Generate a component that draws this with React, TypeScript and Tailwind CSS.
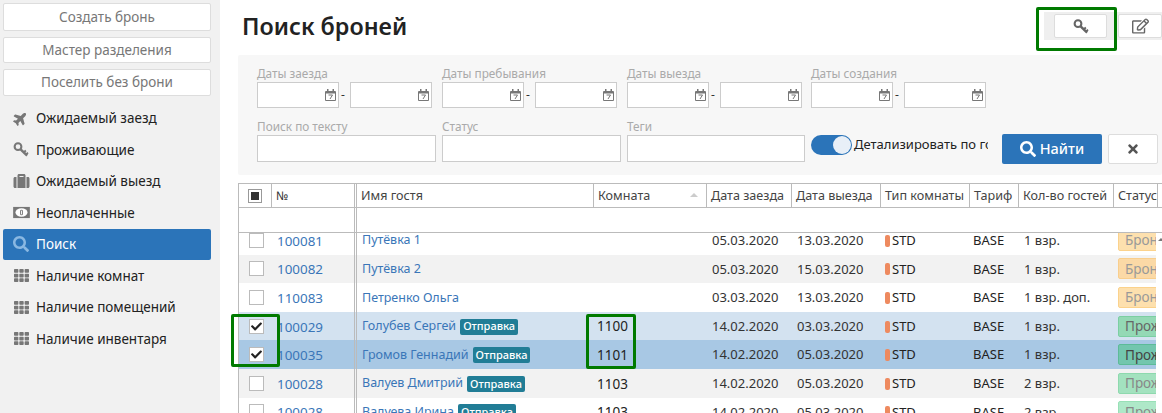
import { FaPlane, FaSuitcase, FaSearch, FaTh, FaTimes, FaRegEdit, FaCheck } from "react-icons/fa";

function KeyIcon({ className }: { className?: string }) {
  return (
    <svg viewBox="0 0 16 16" className={className} fill="none" stroke="currentColor">
      <circle cx="4.8" cy="5" r="3.6" strokeWidth="2.2" />
      <path d="M7.6 7.8 L14.5 14.5" strokeWidth="2.6" />
      <path d="M11 11 L13.2 9 M13.4 13.4 L15.4 11.4" strokeWidth="2" />
    </svg>
  );
}

function MoneyIcon({ className }: { className?: string }) {
  return (
    <svg viewBox="0 0 18 14" className={className}>
      <rect x="0" y="1" width="18" height="12" fill="currentColor" />
      <ellipse cx="9" cy="7" rx="6.5" ry="4.5" fill="#fff" />
      <rect x="7.5" y="4" width="3" height="6" rx="1.4" fill="currentColor" />
      <rect x="8.5" y="5" width="1" height="4" fill="#fff" />
    </svg>
  );
}

function CalendarIcon() {
  return (
    <svg viewBox="0 0 11 12" className="w-[11px] h-[12px] text-[#777]">
      <path fill="none" stroke="currentColor" d="M.5 2.5h10v9H.5z" />
      <path fill="currentColor" d="M2 0h1.5v3H2zM7.5 0H9v3H7.5zM1 3h9v1.5H1z" />
      <path fill="none" stroke="currentColor" d="M3.5 6h4L5 10" />
    </svg>
  );
}

function DateInput() {
  return (
    <div className="w-[82px] h-[26px] bg-white border border-[#ccc] flex items-center justify-end pr-[2px]">
      <CalendarIcon />
    </div>
  );
}

function DateRange({ label, last }: { label: string; last?: boolean }) {
  return (
    <div className={last ? "w-[175px] -ml-[1px]" : "w-[185px]"}>
      <div className="text-[11.8px] leading-[18px] h-[18px] text-[#aaa]">{label}</div>
      <div className="flex items-center gap-[2px] w-[175px]">
        <DateInput />
        <span className="text-xs text-[#333] w-[7px]">-</span>
        <DateInput />
      </div>
    </div>
  );
}

function TextField({ label, width }: { label: string; width: string }) {
  return (
    <div className={width}>
      <div className="text-[11.8px] leading-[18px] h-[18px] text-[#aaa]">{label}</div>
      <div className="h-[27px] bg-white border border-[#ccc]" />
    </div>
  );
}

const actions = [
  { label: "Создать бронь", height: "h-[28px]" },
  { label: "Мастер разделения", height: "h-[26px]" },
  { label: "Поселить без брони", height: "h-[27px]" },
];

const menu = [
  { label: "Ожидаемый заезд", icon: <FaPlane className="w-[15px] h-[15px] -rotate-45" /> },
  { label: "Проживающие", icon: <KeyIcon className="w-[16px] h-[15px]" /> },
  { label: "Ожидаемый выезд", icon: <FaSuitcase className="w-[17px] h-[16px]" /> },
  { label: "Неоплаченные", icon: <MoneyIcon className="w-[17px] h-[13px]" /> },
  { label: "Поиск", icon: <FaSearch className="w-[16px] h-[16px]" />, active: true },
  { label: "Наличие комнат", icon: <FaTh className="w-[17px] h-[15px]" /> },
  { label: "Наличие помещений", icon: <FaTh className="w-[17px] h-[15px]" /> },
  { label: "Наличие инвентаря", icon: <FaTh className="w-[17px] h-[15px]" /> },
];

const columns = "grid grid-cols-[33px_82px_3px_237px_113px_85px_89px_89px_49px_95px_43px_6px]";
const rowColumns = "grid grid-cols-[33px_82px_3px_237px_113px_85px_89px_89px_49px_95px_42px]";

const headers = ["Комната", "Дата заезда", "Дата выезда", "Тип комнаты", "Тариф", "Кол-во гостей", "Статус"];

type Row = {
  id: string;
  name: string;
  send?: boolean;
  room?: string;
  from: string;
  to: string;
  guests: string;
  status: "Бронь" | "Прожив";
  bg: string;
  checked?: boolean;
  statusClass: string;
};

const booked = "bg-[#fde0ae] border-[#fbd28c] text-[#999]";
const rows: Row[] = [
  { id: "100081", name: "Путёвка 1", from: "05.03.2020", to: "13.03.2020", guests: "1 взр.", status: "Бронь", bg: "bg-white", statusClass: booked },
  { id: "100082", name: "Путёвка 2", from: "05.03.2020", to: "15.03.2020", guests: "1 взр.", status: "Бронь", bg: "bg-[#f2f2f2]", statusClass: "bg-[#fbd9a6] border-[#f9ce8c] text-[#999]" },
  { id: "110083", name: "Петренко Ольга", from: "03.03.2020", to: "13.03.2020", guests: "1 взр. доп.", status: "Бронь", bg: "bg-white", statusClass: booked },
  { id: "100029", name: "Голубев Сергей", send: true, room: "1100", from: "14.02.2020", to: "03.03.2020", guests: "1 взр.", status: "Прожив", bg: "bg-[#d3e2f0]", checked: true, statusClass: "bg-[#94d9b5] border-[#7bcfa2] text-[#666]" },
  { id: "100035", name: "Громов Геннадий", send: true, room: "1101", from: "14.02.2020", to: "05.03.2020", guests: "1 взр.", status: "Прожив", bg: "bg-[#a8c8e4]", checked: true, statusClass: "bg-[#73c6ae] border-[#5dbb98] text-[#444]" },
  { id: "100028", name: "Валуев Дмитрий", send: true, room: "1103", from: "14.02.2020", to: "05.03.2020", guests: "2 взр.", status: "Прожив", bg: "bg-[#f2f2f2]", statusClass: "bg-[#a3e2bf] border-[#8ed9ae] text-[#888]" },
  { id: "100028", name: "Валуева Ирина", send: true, room: "1103", from: "14.02.2020", to: "05.03.2020", guests: "2 взр.", status: "Прожив", bg: "bg-white", statusClass: "bg-[#aee8c8] border-[#98e0b6] text-[#888]" },
];

export default function App() {
  return (
    <div className="relative w-[1162px] h-[413px] overflow-hidden flex bg-white text-[13px] text-[#333] font-['Noto_Sans','Open_Sans',sans-serif]">
      {/* Sidebar */}
      <aside className="w-[220px] shrink-0 bg-[#f1f1f1] pt-[3px] px-[3px]">
        <div className="w-[208px] flex flex-col gap-[6px]">
          {actions.map((a) => (
            <div key={a.label} className={`${a.height} bg-white border border-[#ddd] rounded-[2px] flex items-center justify-center text-[13.5px] text-[#777]`}>
              {a.label}
            </div>
          ))}
        </div>
        <nav className="w-[208px] mt-[6.5px] flex flex-col">
          {menu.map((m) => (
            <div
              key={m.label}
              className={`h-[31.5px] flex items-center pl-[10px] rounded-[2px] text-[13.5px] ${m.active ? "bg-[#2b74b9] text-white" : "text-[#222]"}`}
            >
              <span className={`w-[23px] flex ${m.active ? "text-[#8ab8e2]" : "text-[#777]"}`}>{m.icon}</span>
              {m.label}
            </div>
          ))}
        </nav>
      </aside>

      {/* Main */}
      <main className="flex-1 min-w-0 pl-[18px]">
        <div className="h-[55px] flex items-start justify-between">
          <h1 className="ml-[4px] mt-[9px] text-[23.3px] leading-[34px] font-semibold text-[#222]">Поиск броней</h1>
          <div className="w-[118px] h-[28px] mt-[12px] bg-[#efefef] flex items-center pl-[10px] gap-[11px]">
            <div className="w-[53px] h-[24px] bg-white border border-[#ddd] rounded-[2px] flex items-center justify-center text-[#666]">
              <KeyIcon className="w-[16px] h-[15px]" />
            </div>
            <div className="w-[44px] h-[24px] bg-white border border-[#ddd] rounded-[2px] flex items-center justify-center text-[#666]">
              <FaRegEdit className="w-[17px] h-[16px]" />
            </div>
          </div>
        </div>

        {/* Filters */}
        <section className="h-[120px] bg-[#f7f7f7] pl-[19px] pt-[9px] rounded-[2px]">
          <div className="flex">
            <DateRange label="Даты заезда" />
            <DateRange label="Даты пребывания" />
            <DateRange label="Даты выезда" />
            <DateRange label="Даты создания" last />
          </div>
          <div className="flex mt-[9px] gap-[6px]">
            <TextField label="Поиск по тексту" width="w-[179px]" />
            <TextField label="Статус" width="w-[179px]" />
            <TextField label="Теги" width="w-[178px]" />
            <div className="mt-[18px] w-[177px] h-[20px] flex items-center overflow-hidden whitespace-nowrap text-[#222]">
              <div className="w-[41px] h-[20px] shrink-0 rounded-full bg-[#2b74b9] flex justify-end items-center pr-[1px] mr-[2px]">
                <div className="w-[18px] h-[18px] rounded-full bg-[#e8eff7]" />
              </div>
              Детализировать по гостям
            </div>
            <div className="mt-[17px] ml-[8px] w-[100px] h-[30px] bg-[#2b74b9] rounded-[2px] flex items-center justify-center gap-[4px] text-[14.5px] font-medium text-white">
              <FaSearch className="w-[16px] h-[16px]" />
              Найти
            </div>
            <div className="mt-[17px] w-[50px] h-[30px] bg-white border border-[#ddd] rounded-[2px] flex items-center justify-center text-[#555]">
              <FaTimes className="w-[14px] h-[14px]" />
            </div>
          </div>
        </section>

        {/* Table */}
        <section className="mt-[8px] border-l border-[#bbb] -mr-[1px]">
          <div className={`${columns} h-[25px] border-y border-[#bbb] overflow-hidden`}>
            <div className="border-r border-[#bbb] flex items-center pl-[9px]">
              <div className="w-[14px] h-[14px] bg-white border border-[#999] flex items-center justify-center">
                <div className="w-[8px] h-[8px] bg-[#333]" />
              </div>
            </div>
            <div className="flex items-center pl-[4px] text-xs">№</div>
            <div className="border-x border-[#bbb]" />
            <div className="flex items-center pl-[4px] pt-[1px] text-[12.6px] text-[#444] border-r border-[#bbb]">Имя гостя</div>
            {headers.map((h, i) => (
              <div key={h} className={`relative flex items-center pl-[4px] pt-[1px] text-[12.6px] text-[#444] whitespace-nowrap overflow-hidden ${i < headers.length - 1 ? "border-r border-[#bbb]" : ""}`}>
                {h}
                {i === 0 && <span className="absolute right-[8px] top-[9px] w-0 h-0 border-x-[4px] border-x-transparent border-b-[4px] border-b-[#ccc]" />}
              </div>
            ))}
            <div className="border-l border-[#bbb]" />
          </div>
          <div className={`${columns} h-[25px] border-b border-[#bbb]`}>
            <div className="col-span-2" />
            <div className="border-x border-[#bbb]" />
          </div>
          <div className="relative h-[181px] overflow-hidden">
            {/* scrolled-away sort marker at the right edge */}
            <span className="absolute left-[919px] top-[5px] w-0 h-0 border-x-[3px] border-x-transparent border-b-[3px] border-b-[#777]" />
            <div className="-mt-[7px] w-[917px]">
              {rows.map((r, i) => (
                <div key={i} className={`${rowColumns} h-[28.6px] items-center text-[13px] ${r.bg}`}>
                  <div className="pl-[10px]">
                    <div className="w-[15px] h-[15px] bg-white border border-[#bbb] flex items-center justify-center text-[#222]">
                      {r.checked && <FaCheck className="w-[11px] h-[11px]" />}
                    </div>
                  </div>
                  <div className="pl-[5px] pt-[1px] text-[13.4px] text-[#3a76b8]">{r.id}</div>
                  <div className="h-full border-x border-[#bbb]" />
                  <div className="pl-[5px] pt-[1px] flex items-center gap-[4px] text-[12.5px] text-[#3a76b8] whitespace-nowrap">
                    {r.name}
                    {r.send && (
                      <span className="h-[16px] px-[3px] bg-[#217d96] rounded-[2px] text-white text-[11px] font-medium flex items-center">Отправка</span>
                    )}
                  </div>
                  <div className="pl-[3px] pt-[1px] text-[13.5px] text-[#222]">{r.room}</div>
                  <div className="pl-[5px] pt-[1px] text-[#333]">{r.from}</div>
                  <div className="pl-[5px] pt-[1px] text-[#333]">{r.to}</div>
                  <div className="pl-[4px] pt-[1px] flex items-center gap-[2px] text-[#222]">
                    <span className="w-[5px] h-[12px] rounded-[2px] bg-[#ee8a5f]" />
                    STD
                  </div>
                  <div className="pl-[3px] pt-[1px] text-[#222]">BASE</div>
                  <div className="pl-[5px] pt-[1px] text-[#333]">{r.guests}</div>
                  <div className="pl-[4px] overflow-hidden">
                    <div className={`h-[21px] w-[60px] border rounded-l-[2px] pl-[6px] flex items-center whitespace-nowrap overflow-hidden text-[13.5px] ${r.statusClass}`}>
                      {r.status}
                    </div>
                  </div>
                </div>
              ))}
            </div>
          </div>
        </section>
      </main>

      {/* Annotation frames */}
      <div className="absolute left-[1036px] top-[7px] w-[81px] h-[44px] border-[3px] border-[#007a00] rounded-[2px]" />
      <div className="absolute left-[231px] top-[314px] w-[49px] h-[53px] border-[3px] border-[#007a00] rounded-[2px]" />
      <div className="absolute left-[586px] top-[314px] w-[50px] h-[55px] border-[3px] border-[#007a00] rounded-[2px]" />
    </div>
  );
}
